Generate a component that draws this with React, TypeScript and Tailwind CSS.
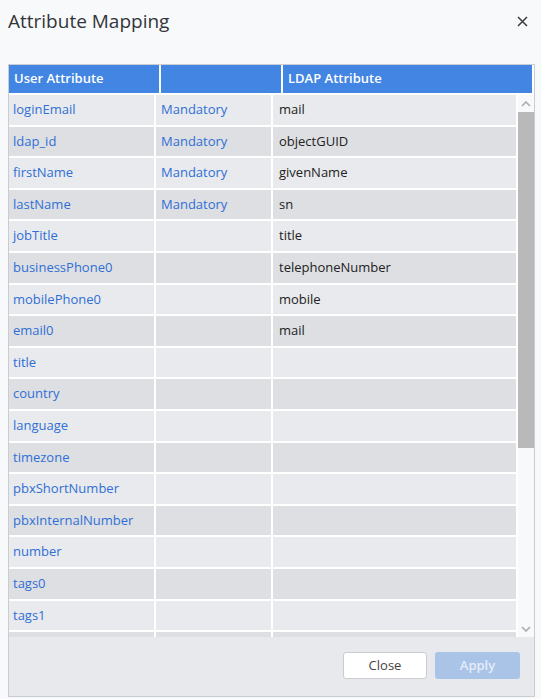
import React from 'react';

const rows: [string, string, string][] = [
  ['loginEmail', 'Mandatory', 'mail'],
  ['ldap_id', 'Mandatory', 'objectGUID'],
  ['firstName', 'Mandatory', 'givenName'],
  ['lastName', 'Mandatory', 'sn'],
  ['jobTitle', '', 'title'],
  ['businessPhone0', '', 'telephoneNumber'],
  ['mobilePhone0', '', 'mobile'],
  ['email0', '', 'mail'],
  ['title', '', ''],
  ['country', '', ''],
  ['language', '', ''],
  ['timezone', '', ''],
  ['pbxShortNumber', '', ''],
  ['pbxInternalNumber', '', ''],
  ['number', '', ''],
  ['tags0', '', ''],
  ['tags1', '', ''],
  ['', '', ''],
];

const Chevron = ({ up }: { up?: boolean }) => (
  <svg width="10" height="6" viewBox="0 0 10 6" className={up ? '' : 'rotate-180'}>
    <polyline points="1,5 5,1 9,5" fill="none" stroke="#a9abae" strokeWidth="1.6" />
  </svg>
);

export default function App() {
  return (
    <div
      className="w-[541px] h-[699px] bg-[#f8f9fb] pl-[8px] pr-[6px] pt-[8px] text-[13px]"
      style={{ fontFamily: '"Open Sans", "Noto Sans", sans-serif' }}
    >
      <div className="flex items-center justify-between h-[26px]">
        <h1 className="text-[19px] text-[#333538] leading-none">Attribute Mapping</h1>
        <svg width="11" height="11" viewBox="0 0 11 11" className="mr-[7px]">
          <path d="M1 1 L10 10 M10 1 L1 10" stroke="#3a3c40" strokeWidth="1.5" />
        </svg>
      </div>

      <div className="mt-[30px] h-[633px] border border-[#c9ccd1] bg-white flex flex-col">
        {/* header */}
        <div className="flex gap-[2px] pr-[2px] h-[28px] shrink-0 text-white font-semibold">
          <div className="w-[150px] bg-[#4285e3] flex items-center pl-[5px]">User Attribute</div>
          <div className="w-[120px] bg-[#4285e3]" />
          <div className="flex-1 bg-[#4285e3] flex items-center pl-[5px]">LDAP Attribute</div>
        </div>

        {/* body */}
        <div className="mt-[2px] h-[542px] flex bg-white overflow-hidden">
          <div className="w-[507px] flex flex-col gap-[2px] overflow-hidden">
            {rows.map(([a, b, c], i) => (
              <div
                key={i}
                className={`flex gap-[2px] h-[29.6px] shrink-0 ${i % 2 === 0 ? 'bg-[#e9eaed]' : 'bg-[#dedfe3]'}`}
              >
                <div className="w-[145px] flex items-center pl-[4px] text-[#2f6fd6]">{a}</div>
                <div className="w-[115px] flex items-center pl-[5px] text-[#2f6fd6] outline-2 outline-white">
                  {b}
                </div>
                <div className="flex-1 flex items-center pl-[6px] text-[#222]">{c}</div>
              </div>
            ))}
          </div>
          <div className="ml-[2px] flex-1 bg-[#f8f9fb] flex flex-col items-center">
            <div className="h-[17px] flex items-center justify-center">
              <Chevron up />
            </div>
            <div className="w-full h-[336px] bg-[#b9b9b9]" />
            <div className="flex-1" />
            <div className="h-[17px] flex items-center justify-center">
              <Chevron />
            </div>
          </div>
        </div>

        {/* footer */}
        <div className="flex-1 bg-[#e8e9ec] flex justify-end items-start gap-[8px] pt-[15px] pr-[14px]">
          <button className="w-[84px] h-[27px] bg-white border border-[#c9ccd1] rounded-[3px] text-[#444] text-[13px]">
            Close
          </button>
          <button className="w-[85px] h-[27px] bg-[#aac4e8] rounded-[3px] text-[#e4ecf8] font-semibold text-[13px]">
            Apply
          </button>
        </div>
      </div>
    </div>
  );
}
